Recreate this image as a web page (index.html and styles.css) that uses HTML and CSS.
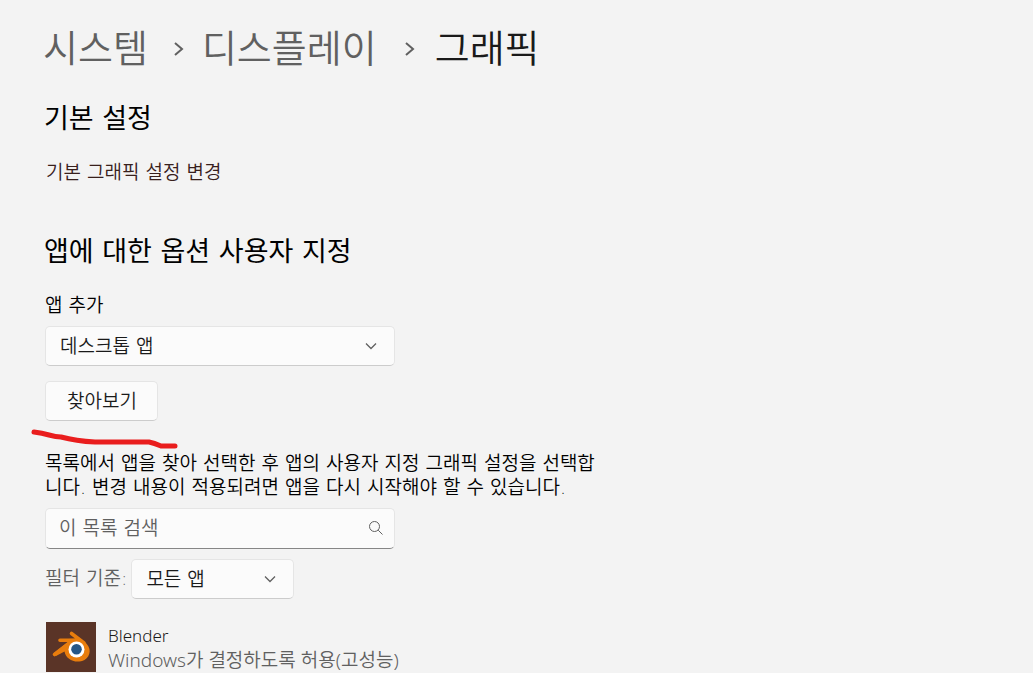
FILE: index.html
```html
<!DOCTYPE html>
<html lang="ko">
<head>
<meta charset="utf-8">
<meta name="viewport" content="width=device-width, initial-scale=1">
<title>그래픽</title>
<link rel="stylesheet" href="styles.css">
</head>
<body>
<main class="page">
  <nav class="crumbs" aria-label="경로">
    <a class="crumb" href="#system">시스템</a>
    <svg class="crumb-arrow" viewBox="0 0 10 16" aria-hidden="true"><path d="M1 2l7 6-7 6"/></svg>
    <a class="crumb" href="#display">디스플레이</a>
    <svg class="crumb-arrow crumb-arrow-last" viewBox="0 0 10 16" aria-hidden="true"><path d="M1 2l7 6-7 6"/></svg>
    <h1 class="crumb-current">그래픽</h1>
  </nav>

  <section class="defaults">
    <h2 class="heading">기본 설정</h2>
    <a class="settings-link" href="#defaults">기본 그래픽 설정 변경</a>
  </section>

  <section class="custom">
    <h2 class="heading">앱에 대한 옵션 사용자 지정</h2>
    <label class="label" for="app-type">앱 추가</label>
    <div class="field">
      <select class="control select" id="app-type"><option>데스크톱 앱</option></select>
      <svg class="chevron" viewBox="0 0 12 8" aria-hidden="true"><path d="M1 1.5l5 5 5-5"/></svg>
    </div>
    <div class="browse">
      <button class="control button" type="button">찾아보기</button>
      <svg class="underline" viewBox="0 0 148 22" aria-hidden="true"><path d="M4 4Q12 5 19 7T31 9Q46 13 65 14H119Q124 15 131 18H145"/></svg>
    </div>
    <p class="hint">목록에서 앱을 찾아 선택한 후 앱의 사용자 지정 그래픽 설정을 선택합니다. 변경 내용이 적용되려면 앱을 다시 시작해야 할 수 있습니다.</p>
    <div class="field">
      <input class="control search" type="text" placeholder="이 목록 검색" aria-label="이 목록 검색">
      <svg class="magnifier" viewBox="0 0 16 16" aria-hidden="true"><circle cx="6.5" cy="6.5" r="5"/><path d="M10.2 10.2l4.3 4.3"/></svg>
    </div>
    <div class="filter">
      <label class="filter-label" for="filter">필터 기준:</label>
      <div class="field filter-field">
        <select class="control select" id="filter"><option>모든 앱</option></select>
        <svg class="chevron" viewBox="0 0 12 8" aria-hidden="true"><path d="M1 1.5l5 5 5-5"/></svg>
      </div>
    </div>
    <ul class="apps">
      <li class="app">
        <svg class="app-icon" viewBox="0 0 50 50" aria-hidden="true">
          <rect width="50" height="50" fill="#5a3427"/>
          <path fill="none" stroke="#e87d0d" stroke-width="3.6" stroke-linecap="round" stroke-linejoin="round" d="M25.500 11.500L38 21M14 18.300H33M8.500 32.500L24 20.500"/>
          <path fill="#e87d0d" d="M22 17L33 16.500L38 19.500C46 25 45 34 38.500 38C30 42 20 38 18.500 29.500L10 34L8 31L22 20z"/>
          <circle cx="30.500" cy="27.500" r="8" fill="#fff"/>
          <circle cx="30.500" cy="27.300" r="5.300" fill="#265787"/>
        </svg>
        <div class="app-text">
          <span class="app-name">Blender</span>
          <span class="app-detail">Windows가 결정하도록 허용(고성능)</span>
        </div>
      </li>
    </ul>
  </section>
</main>
</body>
</html>
```
FILE: styles.css
```css
* { box-sizing: border-box; }

body {
  margin: 0;
  background: #f3f3f3;
  color: #000;
  font-family: "DejaVu Sans", "Noto Sans CJK KR", sans-serif;
  font-size: 19px;
  font-weight: 350;
  line-height: 24px;
}

.page { padding: 21px 45px 0; }

.crumbs {
  display: flex;
  align-items: center;
  margin-left: -2px;
  font-size: 38px;
  line-height: 56px;
}

.crumb { color: #606060; text-decoration: none; }

.crumb-current {
  margin: 0;
  color: #1a1a1a;
  font-size: 38px;
  font-weight: 350;
}

.crumb-arrow {
  width: 10px;
  height: 16px;
  margin: 0 18px 0 26px;
  fill: none;
  stroke: #606060;
  stroke-width: 2;
}

.crumb-arrow-last { margin: 0 20px 0 28px; }

.heading {
  margin: 0 0 0 -1px;
  font-size: 27px;
  font-weight: 400;
  line-height: 40px;
}

.defaults { padding-top: 22px; }

.settings-link {
  display: inline-block;
  margin: 21px 1px 0;
  color: #38201c;
  text-decoration: none;
}

.custom { padding-top: 48px; }

.label { display: block; margin: 21px 0 9px; }

.field { position: relative; max-width: 350px; }

.control {
  display: block;
  height: 40px;
  border: 1px solid #e5e5e5;
  border-bottom-color: #cccccc;
  border-radius: 5px;
  background: #fbfbfb;
  color: #1a1a1a;
  font: inherit;
}

.select { appearance: none; width: 100%; padding: 0 40px 0 14px; }

.chevron {
  position: absolute;
  top: 16px;
  right: 18px;
  width: 12px;
  height: 8px;
  fill: none;
  stroke: #606060;
  stroke-width: 1.3;
  pointer-events: none;
}

.browse { position: relative; margin-top: 15px; }

.button { padding: 0 20px 0 21px; }

.underline {
  position: absolute;
  top: 47px;
  left: -15px;
  width: 148px;
  height: 22px;
  fill: none;
  stroke: #e91d1d;
  stroke-width: 5;
  stroke-linecap: round;
  stroke-linejoin: round;
}

.hint { max-width: 556px; margin: 30px 0 9px; }

.search {
  width: 100%;
  height: 41px;
  padding: 0 40px 1px 13px;
  border-bottom-color: #868686;
}

.search::placeholder { color: #606060; opacity: 1; }

.magnifier {
  position: absolute;
  top: 12px;
  right: 11px;
  width: 16px;
  height: 16px;
  fill: none;
  stroke: #606060;
  stroke-width: 1;
}

.filter {
  display: flex;
  align-items: center;
  gap: 4px;
  margin-top: 10px;
}

.filter-label { padding-bottom: 2px; color: #606060; }

.filter-field { width: 163px; }

.apps { margin: 23px 0 0; padding: 0; list-style: none; }

.app { display: flex; gap: 12px; }

.app-icon { width: 50px; height: 50px; margin-left: 1px; }

.app-text {
  display: flex;
  flex-direction: column;
  padding-top: 2px;
  font-family: "Noto Sans", "Noto Sans CJK KR", sans-serif;
}

.app-name { color: #1a1a1a; font-size: 17px; }

.app-detail { color: #606060; }
```
